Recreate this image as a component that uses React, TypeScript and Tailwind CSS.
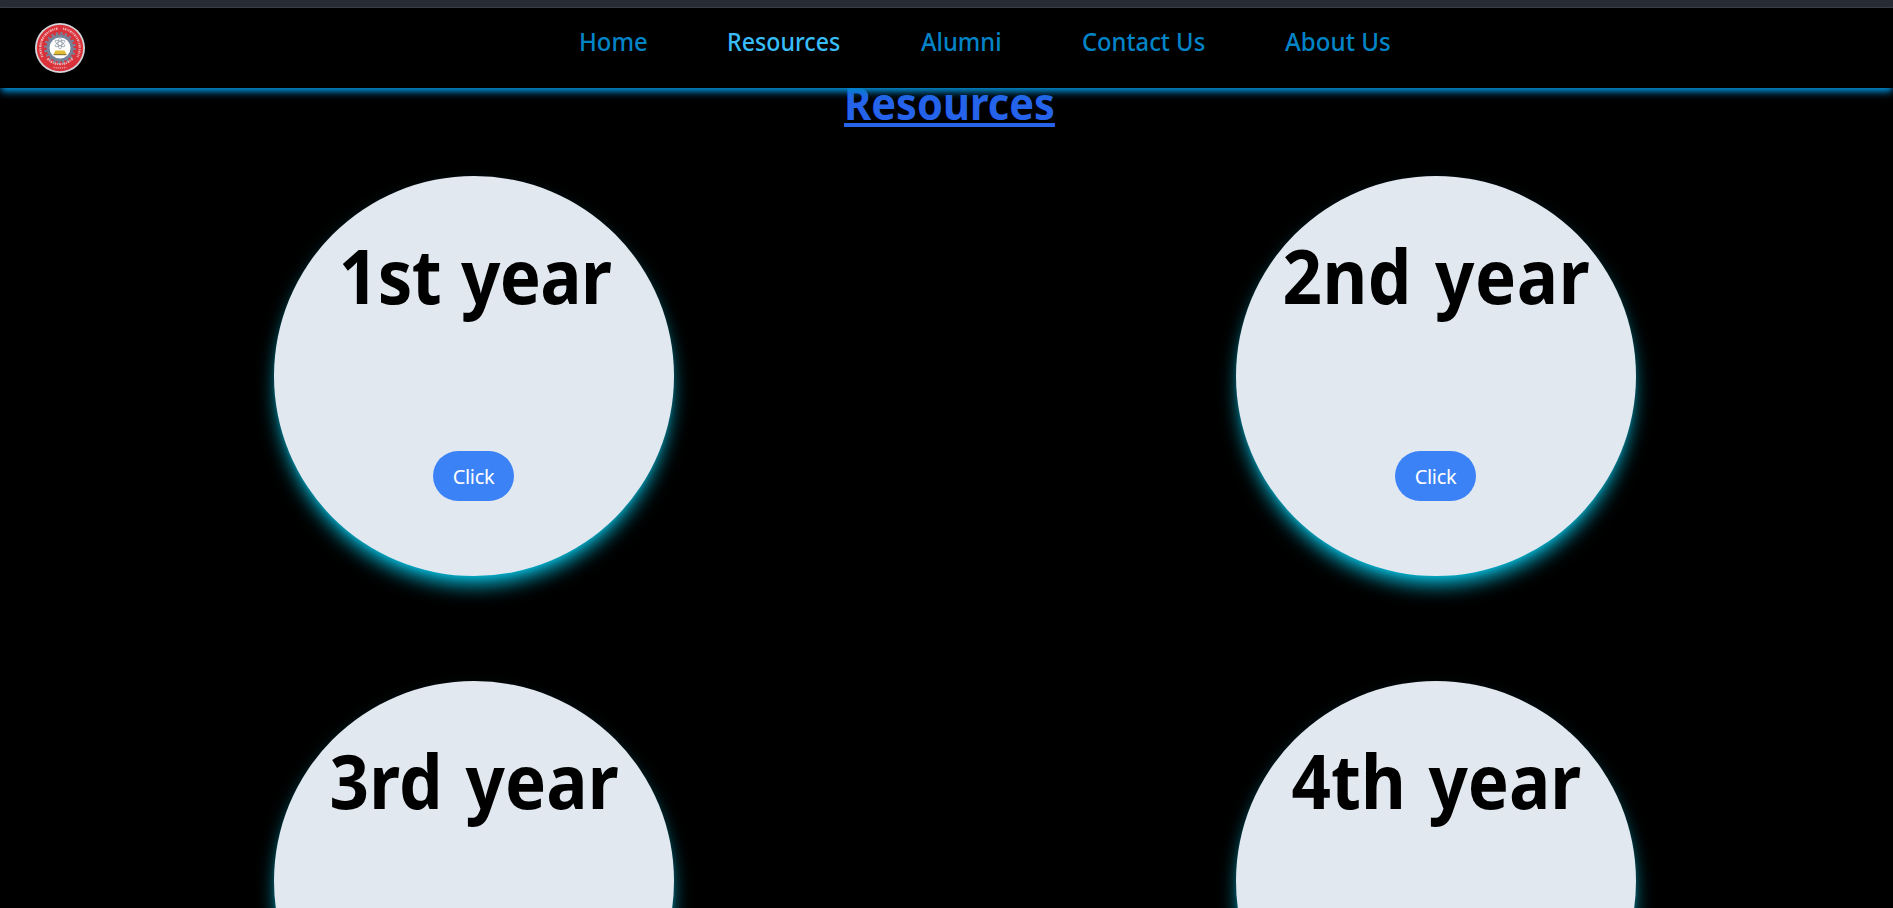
const links = [
  { label: "Home", style: "w-[67px] text-[#0284c7]", fit: "scale-x-[.955]" },
  { label: "Resources", style: "w-[112px] text-[#38bdf8]", fit: "scale-x-[.928]" },
  { label: "Alumni", style: "w-[80px] text-[#0284c7]", fit: "scale-x-[.95]" },
  { label: "Contact Us", style: "w-[122px] text-[#0284c7]", fit: "scale-x-[.95]" },
  { label: "About Us", style: "w-[105px] text-[#0284c7]", fit: "scale-x-[.965]" },
];

const years = [
  { label: "1st year", fit: "tracking-[-0.7px] [word-spacing:3px] ml-[3px]" },
  { label: "2nd year", fit: "tracking-[0.6px] [word-spacing:5px] ml-[1px]" },
  { label: "3rd year", fit: "tracking-[0.2px] [word-spacing:5px] ml-[1px]" },
  { label: "4th year", fit: "[word-spacing:5px]" },
];

function Logo() {
  return (
    <svg viewBox="0 0 50 50" className="size-[50px]">
      <circle cx="25" cy="25" r="25" fill="#d3d6dc" />
      <circle cx="25" cy="25" r="23.2" fill="#d9323a" />
      <circle cx="25" cy="25" r="14.6" fill="none" stroke="#75839a" strokeWidth="2.6" strokeDasharray="2.2 2.386" />
      <circle cx="25" cy="25" r="12" fill="#fff" stroke="#75839a" strokeWidth="3" />
      <g fill="none" stroke="#f6cfd0" strokeWidth="2.2" opacity=".8">
        <path d="M7.5 34a19.5 19.5 0 0 1 15-28.4" strokeDasharray="1.3 .8 .8 .9 1.9 .7" />
        <path d="M28 5.7a19.5 19.5 0 0 1 14.5 28.3" strokeDasharray="1 .8 1.6 .7 .7 .9" />
        <path d="M12.5 35.5a16.5 16.5 0 0 0 25 0" strokeDasharray="1.7 .8 1 .9" />
        <path d="M18.5 44.3q6.5 1.2 13 0" strokeDasharray="1.3 .8" strokeWidth="1.7" opacity=".7" />
      </g>
      <g fill="none" stroke="#8a93a0" strokeWidth=".7">
        <ellipse cx="25" cy="20.5" rx="2" ry="5.5" />
        <ellipse cx="25" cy="20.5" rx="2" ry="5.5" transform="rotate(60 25 20.5)" />
        <ellipse cx="25" cy="20.5" rx="2" ry="5.5" transform="rotate(-60 25 20.5)" />
      </g>
      <path d="M20.5 27.5h9l1.800 3.500h-12.600z" fill="#e0bd35" />
      <path d="M18.5 31h13v1.2h-13z" fill="#8c7a3c" />
    </svg>
  );
}

export default function App() {
  return (
    <div className='h-[908px] overflow-hidden bg-black font-["Noto_Sans",sans-serif]'>
      <div className="h-2 border-b border-[#3c3c3e] bg-[#282c34]" />
      <nav className="relative z-10 flex h-20 bg-black pt-[15px] pl-[35px] shadow-[0_5px_7.5px_-1.25px_#0284c7,0_2.5px_5px_-2.5px_#0284c7]">
        <Logo />
        <ul className="ml-[494px] flex gap-[81.3px] pt-px text-[25px] leading-[35px] font-medium">
          {links.map((l) => (
            <li key={l.label} className={`whitespace-nowrap ${l.style}`}>
              <a className={`inline-block origin-left ${l.fit}`}>{l.label}</a>
            </li>
          ))}
        </ul>
      </nav>
      <h1 className="ml-[844px] h-[88px] w-[211px] text-[45px] leading-[30px] font-bold whitespace-nowrap text-[#2563eb]">
        <span className="inline-block origin-left scale-x-[.924] underline decoration-[4px] underline-offset-[3px]">
          Resources
        </span>
      </h1>
      <main className="grid grid-cols-[400px_400px] gap-x-[562px] gap-y-[105px] pl-[274px]">
        {years.map((y) => (
          <section
            key={y.label}
            className="flex size-[400px] flex-col items-center rounded-full bg-[#e2e8f0] pt-[62px] shadow-[0_12.5px_18.75px_-3.75px_#06b6d4,0_5px_7.5px_-5px_#06b6d4]"
          >
            <h2 className={`scale-x-[.92] text-[75px] leading-[75px] font-bold whitespace-nowrap text-black ${y.fit}`}>
              {y.label}
            </h2>
            <button className="mt-[138px] mr-px h-[50px] w-[81px] rounded-[25px] bg-[#3b82f6] pt-px text-[20px] leading-[30px] tracking-[-0.3px] text-white">
              Click
            </button>
          </section>
        ))}
      </main>
    </div>
  );
}
